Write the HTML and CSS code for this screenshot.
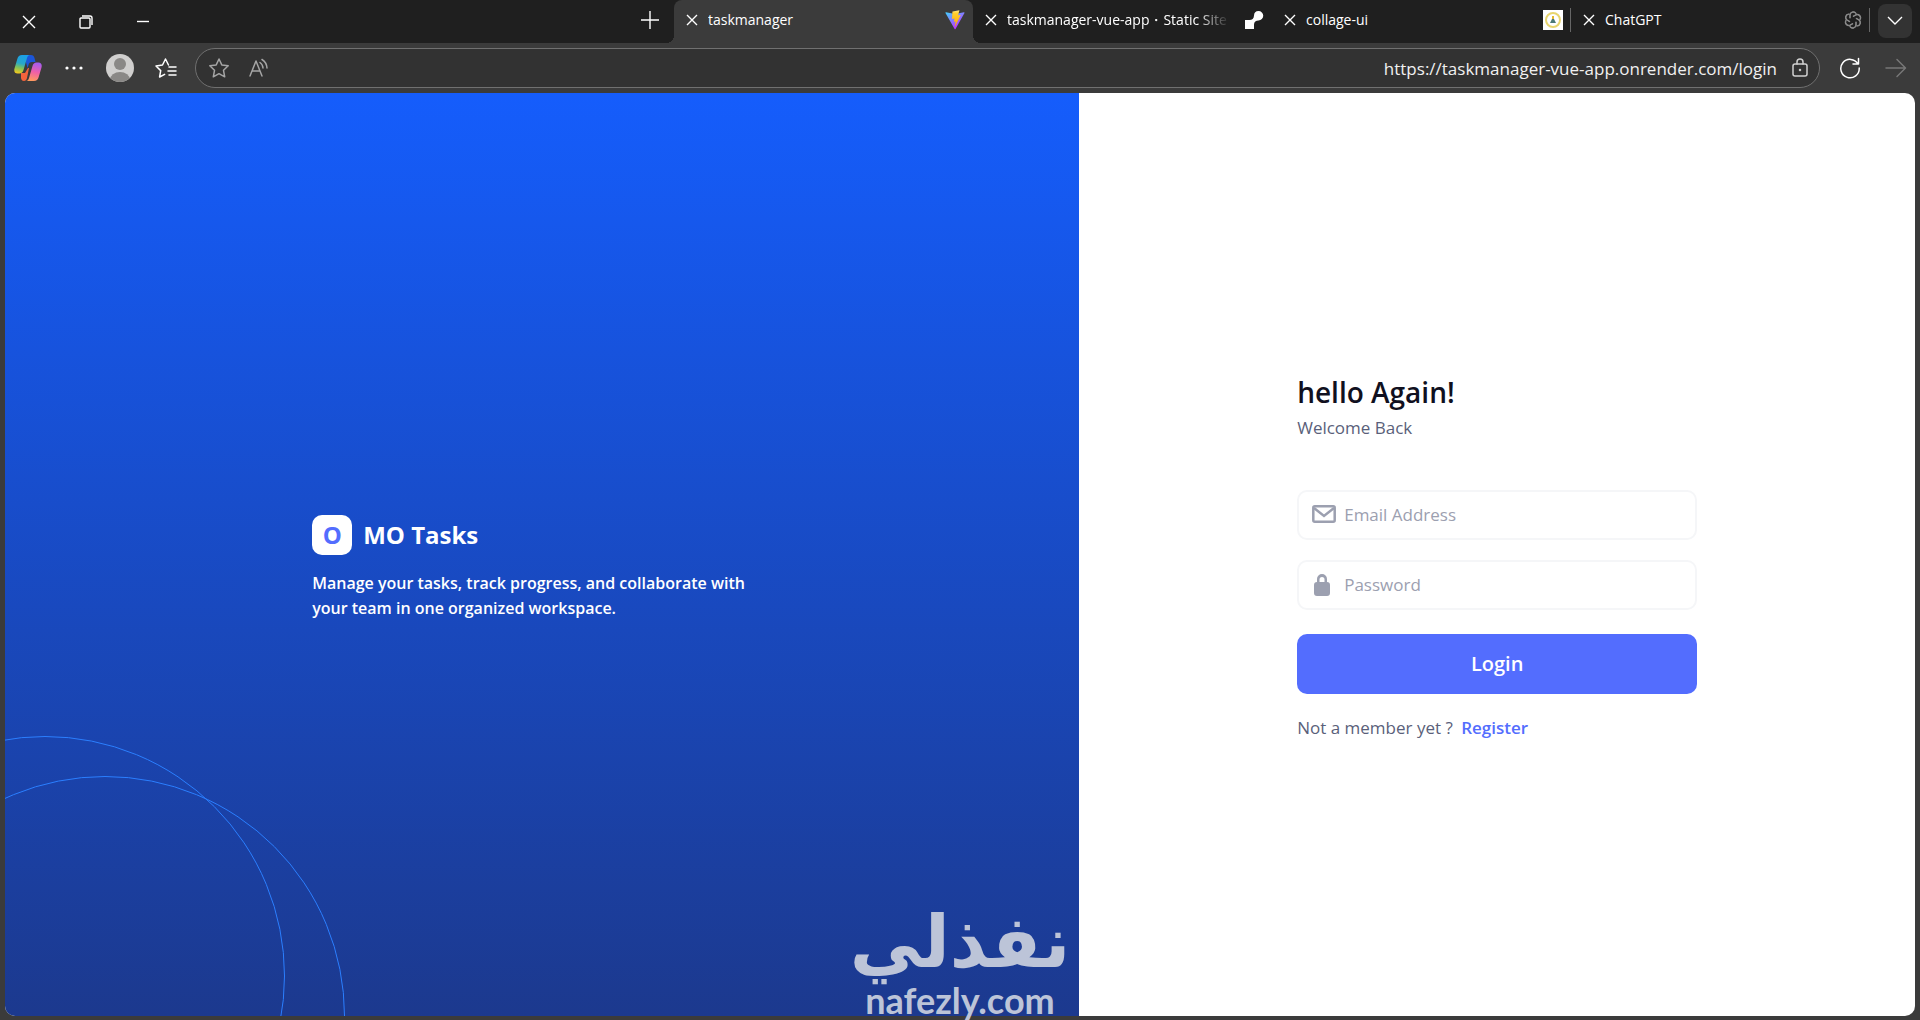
FILE: index.html
```html
<!DOCTYPE html>
<html lang="en">

<head>
  <meta charset="UTF-8">
  <title>taskmanager</title>
  <link rel="stylesheet" href="styles.css">
</head>

<body>
  <div class="browser">
    <!-- Tab strip -->
    <header class="tab-bar">
      <div class="window-controls">
        <button class="window-btn" aria-label="Close">
          <svg width="14" height="14" viewBox="0 0 14 14"><path d="M1 1l12 12M13 1L1 13" /></svg>
        </button>
        <button class="window-btn" aria-label="Restore">
          <svg width="14" height="14" viewBox="0 0 14 14"><path d="M1 4a1 1 0 0 1 1-1h8a1 1 0 0 1 1 1v8a1 1 0 0 1-1 1H2a1 1 0 0 1-1-1zM3 1h8a2 2 0 0 1 2 2v7" /></svg>
        </button>
        <button class="window-btn" aria-label="Minimize">
          <svg width="14" height="14" viewBox="0 0 14 14"><path d="M1 6.500h12" /></svg>
        </button>
      </div>
      <button class="new-tab" aria-label="New tab">
        <svg width="18" height="18" viewBox="0 0 18 18"><path d="M9 0v18M0 9h18" /></svg>
      </button>
      <nav class="tabs">
        <div class="tab active">
          <button class="tab-close" aria-label="Close tab"><svg width="12" height="12" viewBox="0 0 12 12"><path d="M1 1l10 10M11 1L1 11" /></svg></button>
          <span class="tab-title">taskmanager</span>
          <svg class="favicon" width="20" height="20" viewBox="0 0 410 404">
            <defs>
              <linearGradient id="viteBlue" x1="0" y1="0" x2="0.600" y2="0.900">
                <stop offset="0" stop-color="#41d1ff" />
                <stop offset="1" stop-color="#bd34fe" />
              </linearGradient>
              <linearGradient id="viteYellow" x1="0" y1="0" x2="0" y2="1">
                <stop offset="0" stop-color="#ffea83" />
                <stop offset="0.200" stop-color="#ffcf2d" />
                <stop offset="1" stop-color="#ffa800" />
              </linearGradient>
            </defs>
            <path fill="url(#viteBlue)" d="M399 59L216 388c-4 7-15 7-19 0L10 59c-4-7 2-16 11-14l184 32 183-32c9-2 15 7 11 14z" />
            <path fill="url(#viteYellow)" d="M293 2L157 28c-3 0-5 2-5 5l-8 141c0 4 3 6 7 6l37-9c4-1 7 2 6 6l-11 55c-1 4 3 7 6 6l24-7c3-1 7 2 6 6l-18 87c-1 5 6 8 9 4l110-222c2-4-1-8-5-7l-39 8c-4 0-7-3-6-7l25-91c1-4-2-7-2-7z" />
          </svg>
        </div>
        <div class="tab">
          <button class="tab-close" aria-label="Close tab"><svg width="12" height="12" viewBox="0 0 12 12"><path d="M1 1l10 10M11 1L1 11" /></svg></button>
          <span class="tab-title faded">taskmanager-vue-app・Static Site</span>
          <svg class="favicon" width="20" height="20" viewBox="0 0 20 20" fill="#fff"><path d="M14.500 1A4.700 4.700 0 0 0 10 5.500C10 8.500 8 10 5.500 10H1v9h9v-4.500C10 12 12 10.500 14.500 10.500A4.750 4.750 0 0 0 14.500 1z" /></svg>
        </div>
        <div class="tab divided">
          <button class="tab-close" aria-label="Close tab"><svg width="12" height="12" viewBox="0 0 12 12"><path d="M1 1l10 10M11 1L1 11" /></svg></button>
          <span class="tab-title">collage-ui</span>
          <svg class="favicon" width="20" height="20" viewBox="0 0 20 20">
            <rect width="20" height="20" fill="#fff" />
            <circle cx="10" cy="10" r="7" fill="none" stroke="#e8d56e" stroke-width="2" />
            <path d="M10 6v3" stroke="#e5b92e" stroke-width="2" />
            <path d="M9 9h2l2 4H7z" fill="#4c7a78" />
          </svg>
        </div>
        <div class="tab divided">
          <button class="tab-close" aria-label="Close tab"><svg width="12" height="12" viewBox="0 0 12 12"><path d="M1 1l10 10M11 1L1 11" /></svg></button>
          <span class="tab-title">ChatGPT</span>
          <svg class="favicon" width="18" height="18" viewBox="0 0 24 24" fill="none" stroke="#8a8a8a" stroke-width="1.500">
            <path id="petal" d="M12 7.400l4-2.300a4.300 4.300 0 0 1 6 5.200c-.3 1-.9 1.700-1.600 2.200M8 9.700V5.500a4.300 4.300 0 0 1 7.800-2.200" />
            <use href="#petal" transform="rotate(60 12 12)" />
            <use href="#petal" transform="rotate(120 12 12)" />
            <use href="#petal" transform="rotate(180 12 12)" />
            <use href="#petal" transform="rotate(240 12 12)" />
            <use href="#petal" transform="rotate(300 12 12)" />
          </svg>
        </div>
      </nav>
      <button class="tab-menu" aria-label="Tab actions">
        <svg width="16" height="10" viewBox="0 0 16 10"><path d="M1 1l7 7 7-7" /></svg>
      </button>
    </header>

    <!-- Toolbar with the address field -->
    <div class="toolbar">
      <button class="tool-btn" aria-label="Copilot">
        <svg width="28" height="28" viewBox="0 0 28 28">
          <defs>
            <linearGradient id="copilotLeft" x1="0.500" y1="0" x2="0.300" y2="1">
              <stop offset="0" stop-color="#1b9fe8" />
              <stop offset="0.450" stop-color="#28a8c9" />
              <stop offset="0.700" stop-color="#7fc25a" />
              <stop offset="1" stop-color="#f2c81e" />
            </linearGradient>
            <linearGradient id="copilotRight" x1="0.600" y1="0" x2="0.400" y2="1">
              <stop offset="0" stop-color="#a45cf0" />
              <stop offset="0.500" stop-color="#ef5fa8" />
              <stop offset="1" stop-color="#ff9a5c" />
            </linearGradient>
          </defs>
          <path fill="#1b55d8" d="M10 1h7c2 0 3 1 3.500 3L21.500 8H18c-2 0-3 1-3.500 3l-1 3z" />
          <path fill="#f4633c" d="M7 19h4l3-5 1 0-2 10c-.5 2-1.500 3-3 3-2 0-2.500-1-3-3z" />
          <path fill="url(#copilotLeft)" d="M8 1h8c-1.500 0-2.500 1-3 3L9.500 16c-.6 2-2 3.500-4 3.500H3.500C1 19.500-.3 17.500.5 14.500l2.800-9.500C4 2.500 5.500 1 8 1z" />
          <path fill="url(#copilotRight)" d="M20 27h-8c1.500 0 2.500-1 3-3l3.500-12c.6-2 2-3.500 4-3.500h2c2.500 0 3.800 2 3 5L24.700 23C24 25.500 22.500 27 20 27z" />
        </svg>
      </button>
      <button class="tool-btn" aria-label="Settings and more">
        <svg width="18" height="4" viewBox="0 0 18 4" fill="#fff"><circle cx="2" cy="2" r="1.600" /><circle cx="9" cy="2" r="1.600" /><circle cx="16" cy="2" r="1.600" /></svg>
      </button>
      <button class="tool-btn" aria-label="Profile">
        <svg width="28" height="28" viewBox="0 0 28 28">
          <clipPath id="avatar"><circle cx="14" cy="14" r="14" /></clipPath>
          <g clip-path="url(#avatar)">
            <rect width="28" height="28" fill="#d0cfce" />
            <circle cx="14" cy="10" r="6" fill="#8a8886" />
            <ellipse cx="14" cy="26" rx="10" ry="8" fill="#8a8886" />
          </g>
        </svg>
      </button>
      <button class="tool-btn" aria-label="Favorites">
        <svg class="line-icon" width="22" height="20" viewBox="0 0 22 20"><path d="M13.500 7L10.500 1 7.500 7 1 8l4.700 4.600L4.600 19l5-2.600M14 9h7M13 13h8M14 17h7" /></svg>
      </button>
      <div class="address">
        <button class="address-btn" aria-label="Add to favorites">
          <svg class="line-icon dim" width="22" height="22" viewBox="0 0 22 22"><path d="M11 2l2.800 5.900 6.400.9-4.700 4.500 1.200 6.500-5.700-3.100-5.700 3.100 1.200-6.500L1.800 8.800l6.400-.9z" /></svg>
        </button>
        <button class="address-btn" aria-label="Read aloud">
          <svg class="line-icon dim" width="22" height="20" viewBox="0 0 22 20"><path d="M2 18L8 3l6 15M4 13h8M12 4.500a7 7 0 0 1 3 5.500M14 1.500a11 11 0 0 1 5 8.500" /></svg>
        </button>
        <input class="address-input" type="text" aria-label="Address" value="https://taskmanager-vue-app.onrender.com/login">
        <svg class="line-icon lock" width="18" height="20" viewBox="0 0 18 20"><rect x="2" y="6" width="14" height="12" rx="2" /><path d="M6 6V4a3 3 0 0 1 6 0v2" /><circle cx="9" cy="12" r="0.500" /></svg>
      </div>
      <button class="tool-btn" aria-label="Reload">
        <svg class="line-icon" width="22" height="22" viewBox="0 0 22 22"><path d="M19 7a9.200 9.200 0 1 0 1.200 4M19.500 1.500V7H14" /></svg>
      </button>
      <button class="tool-btn" aria-label="Forward" disabled>
        <svg class="line-icon faint" width="22" height="20" viewBox="0 0 22 20"><path d="M1 10h19M12 1.500l8.500 8.500-8.500 8.500" /></svg>
      </button>
    </div>

    <!-- Login page -->
    <main class="page">
      <section class="intro">
        <div class="intro-content">
          <div class="brand">
            <span class="brand-logo">O</span>
            <h1 class="brand-name">MO Tasks</h1>
          </div>
          <p class="intro-text">Manage your tasks, track progress, and collaborate with your team in one organized workspace.</p>
        </div>
        <div class="circle circle-back"></div>
        <div class="circle circle-front"></div>
      </section>
      <section class="login">
        <form class="login-form">
          <h2 class="login-title">hello Again!</h2>
          <p class="login-subtitle">Welcome Back</p>
          <label class="field">
            <svg width="24" height="24" viewBox="0 0 24 24" fill="none" stroke="#9ca0b0" stroke-width="2.500"><rect x="1.300" y="3.300" width="21.400" height="15.400" rx="1.500" /><path d="M2 5l10 8 10-8" /></svg>
            <input type="email" placeholder="Email Address" aria-label="Email Address">
          </label>
          <label class="field">
            <svg width="24" height="24" viewBox="0 0 24 24" fill="#9ca0b0"><path fill-rule="evenodd" d="M5 9V6a5 5 0 0 1 10 0v3a3 3 0 0 1 3 3v8a3 3 0 0 1-3 3H5a3 3 0 0 1-3-3v-8a3 3 0 0 1 3-3zm2.500 0h5V6.500a2.500 2.500 0 0 0-5 0z" /></svg>
            <input type="password" placeholder="Password" aria-label="Password">
          </label>
          <button class="login-btn" type="submit">Login</button>
          <p class="register">Not a member yet ? <a href="#">Register</a></p>
        </form>
      </section>
    </main>

    <div class="watermark">
      <span class="watermark-name" lang="ar">نفذلي</span>
      <span class="watermark-site">nafezly.com</span>
    </div>
  </div>
</body>

</html>
```

FILE: styles.css
```css
* {
  box-sizing: border-box;
}

body {
  margin: 0;
  font-family: "Open Sans", "Noto Sans", sans-serif;
  background-color: #3b3b3b;
}

button {
  display: flex;
  align-items: center;
  justify-content: center;
  padding: 0;
  border: none;
  background: none;
  font-family: inherit;
  cursor: pointer;
}

input {
  min-width: 0;
  padding: 0;
  border: none;
  outline: none;
  background: none;
  font-family: inherit;
}

h1,
h2,
p {
  margin: 0;
}

.browser {
  position: relative;
  display: flex;
  flex-direction: column;
  min-height: 100vh;
}

/* Tab strip */
.tab-bar {
  display: flex;
  height: 43px;
  padding-right: 8px;
  background-color: #1f1f1f;
}

.tab-bar svg {
  flex-shrink: 0;
}

.window-btn svg,
.new-tab svg,
.tab-close svg,
.tab-menu svg {
  fill: none;
  stroke: #fff;
  stroke-width: 1.4;
}

.window-controls {
  display: flex;
  margin-right: auto;
}

.window-btn {
  width: 57px;
}

.new-tab {
  width: 48px;
  padding-bottom: 4px;
}

.tabs {
  display: flex;
  flex: 0 1 1196px;
  min-width: 0;
}

.tab {
  position: relative;
  display: flex;
  align-items: center;
  flex: 1;
  min-width: 0;
  gap: 10px;
  padding: 0 8px 4px 12px;
}

.tab.active {
  background-color: #3b3b3b;
  border-radius: 8px 8px 0 0;
}

/* Flared feet of the active tab */
.tab.active::before,
.tab.active::after {
  content: "";
  position: absolute;
  bottom: 0;
  width: 8px;
  height: 8px;
}

.tab.active::before {
  right: 100%;
  background: radial-gradient(circle at 0 0, #1f1f1f 8px, #3b3b3b 8px);
}

.tab.active::after {
  left: 100%;
  background: radial-gradient(circle at 100% 0, #1f1f1f 8px, #3b3b3b 8px);
}

.tab.divided::after {
  content: "";
  position: absolute;
  right: 0;
  width: 1px;
  height: 24px;
  background-color: #666;
}

.tab-title {
  flex: 1;
  overflow: hidden;
  white-space: nowrap;
  font-size: 14px;
  color: #fff;
}

.tab-title.faded {
  margin-right: 4px;
  mask-image: linear-gradient(to right, #000 85%, transparent);
}

.tab-menu {
  width: 34px;
  height: 34px;
  margin: 4px 0 0 8px;
  border-radius: 8px;
  background-color: #333;
}

/* Toolbar */
.toolbar {
  display: flex;
  align-items: center;
  height: 50px;
  padding: 0 1px 0 5px;
}

.tool-btn {
  width: 46px;
  height: 40px;
}

.line-icon {
  fill: none;
  stroke: #fff;
  stroke-width: 1.5;
  stroke-linejoin: round;
  stroke-linecap: round;
}

.line-icon.dim {
  stroke: #a5a5a5;
}

.line-icon.faint {
  stroke: #777;
}

.line-icon.lock {
  margin-left: -4px;
  stroke: #d0d0d0;
}

.address {
  display: flex;
  align-items: center;
  flex: 1;
  height: 40px;
  margin: 0 7px 0 6px;
  padding: 0 10px 0 12px;
  gap: 18px;
  border: 1px solid #707070;
  border-radius: 20px;
  background-color: #323232;
}

.address-input {
  flex: 1;
  font-size: 17px;
  text-align: right;
  color: #f0f0f0;
}

/* Page */
.page {
  display: flex;
  flex: 1;
  margin: 0 5px 4px;
  overflow: hidden;
  border-radius: 10px;
  background-color: #fff;
}

.intro {
  position: relative;
  display: flex;
  align-items: center;
  justify-content: center;
  flex: 9;
  overflow: hidden;
  background: linear-gradient(to bottom, #155dfc, #1c398e);
}

.intro-content {
  width: 460px;
  padding-top: 26px;
  color: #fff;
}

.brand {
  display: flex;
  align-items: center;
  gap: 11px;
  margin-bottom: 16px;
}

.brand-logo {
  display: flex;
  align-items: center;
  justify-content: center;
  width: 40px;
  height: 40px;
  border-radius: 10px;
  font-size: 24px;
  font-weight: 700;
  color: #536dfe;
  background-color: #fff;
}

.brand-name {
  font-size: 24px;
  font-weight: 700;
}

.intro-text {
  font-size: 16px;
  font-weight: 600;
  line-height: 25px;
}

/* Decorative circles in the corner */
.circle {
  position: absolute;
  width: 480px;
  height: 480px;
  border: 1px solid #2b7fff;
  border-radius: 50%;
}

.circle-back {
  left: -200px;
  bottom: -200px;
}

.circle-front {
  left: -140px;
  bottom: -240px;
}

.login {
  display: flex;
  align-items: center;
  justify-content: center;
  flex: 7;
}

.login-form {
  width: 400px;
  padding-top: 4px;
}

.login-title {
  margin-bottom: 2px;
  font-size: 28px;
  font-weight: 600;
  line-height: 40px;
  color: #101020;
}

.login-subtitle {
  margin-bottom: 48px;
  font-size: 17px;
  line-height: 28px;
  color: #5a5f7a;
}

.field {
  display: flex;
  align-items: center;
  gap: 8px;
  height: 50px;
  margin-bottom: 20px;
  padding: 0 13px;
  border: 2px solid #f5f6f8;
  border-radius: 10px;
}

.field input {
  flex: 1;
  font-size: 17px;
}

.field input::placeholder {
  color: #9ca0b0;
}

.login-btn {
  width: 100%;
  height: 60px;
  margin: 24px 0 20px;
  border-radius: 10px;
  font-size: 20px;
  font-weight: 600;
  color: #fff;
  background-color: #536dfe;
}

.register {
  font-size: 17px;
  line-height: 28px;
  color: #5a5f7a;
}

.register a {
  margin-left: 4px;
  font-weight: 600;
  color: #536dfe;
  text-decoration: none;
}

/* Watermark over the page */
.watermark {
  position: absolute;
  left: 852px;
  bottom: 2px;
  display: flex;
  flex-direction: column;
  align-items: center;
  width: 216px;
  color: #bcc4d8;
}

.watermark-name {
  font-family: "DejaVu Sans", sans-serif;
  font-size: 72px;
  font-weight: 700;
  line-height: 80px;
}

.watermark-site {
  font-family: Lato, sans-serif;
  font-size: 36px;
  font-weight: 700;
  line-height: 36px;
}
```
